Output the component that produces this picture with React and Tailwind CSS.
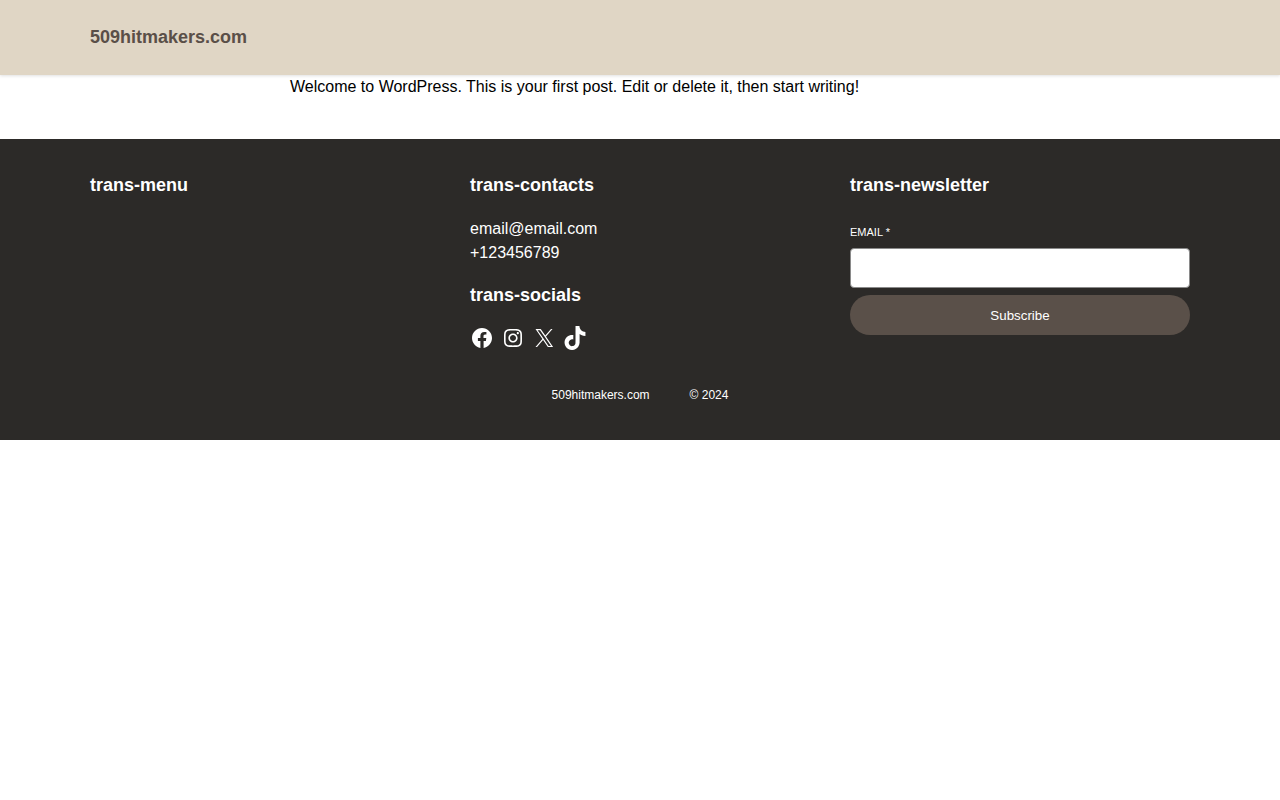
import React from 'react';

const FONT = "font-['Liberation_Sans',Arial,sans-serif]";

const SocialIcons = () => (
    <div className="flex items-center mt-[15px] h-[32px]">
        {/* facebook */}
        <svg viewBox="0 0 24 24" className="w-6 h-6 fill-white">
            <path d="M12 2C6.5 2 2 6.5 2 12c0 5 3.7 9.1 8.4 9.9v-7H7.9V12h2.5V9.8c0-2.5 1.5-3.9 3.8-3.9 1.1 0 2.2.2 2.2.2v2.5h-1.3c-1.2 0-1.6.8-1.6 1.6V12h2.8l-.4 2.9h-2.3v7C18.3 21.1 22 17 22 12c0-5.5-4.5-10-10-10z" />
        </svg>
        {/* instagram */}
        <svg viewBox="0 0 24 24" className="w-6 h-6 ml-[7px] fill-white">
            <path d="M12,4.622c2.403,0,2.688,0.009,3.637,0.052c0.877,0.04,1.354,0.187,1.671,0.31c0.42,0.163,0.72,0.358,1.035,0.673 c0.315,0.315,0.51,0.615,0.673,1.035c0.123,0.317,0.27,0.794,0.31,1.671c0.043,0.949,0.052,1.234,0.052,3.637 s-0.009,2.688-0.052,3.637c-0.04,0.877-0.187,1.354-0.31,1.671c-0.163,0.42-0.358,0.72-0.673,1.035 c-0.315,0.315-0.615,0.51-1.035,0.673c-0.317,0.123-0.794,0.27-1.671,0.31c-0.949,0.043-1.234,0.052-3.637,0.052 s-2.688-0.009-3.637-0.052c-0.877-0.04-1.354-0.187-1.671-0.31c-0.42-0.163-0.72-0.358-1.035-0.673 c-0.315-0.315-0.51-0.615-0.673-1.035c-0.123-0.317-0.27-0.794-0.31-1.671C4.631,14.688,4.622,14.403,4.622,12 s0.009-2.688,0.052-3.637c0.04-0.877,0.187-1.354,0.31-1.671c0.163-0.42,0.358-0.72,0.673-1.035 c0.315-0.315,0.615-0.51,1.035-0.673c0.317-0.123,0.794-0.27,1.671-0.31C9.312,4.631,9.597,4.622,12,4.622 M12,3 C9.556,3,9.249,3.01,8.289,3.054C7.331,3.098,6.677,3.25,6.105,3.472C5.513,3.702,5.011,4.01,4.511,4.511 c-0.5,0.5-0.808,1.002-1.038,1.594C3.25,6.677,3.098,7.331,3.054,8.289C3.01,9.249,3,9.556,3,12c0,2.444,0.01,2.751,0.054,3.711 c0.044,0.958,0.196,1.612,0.418,2.185c0.23,0.592,0.538,1.094,1.038,1.594c0.5,0.5,1.002,0.808,1.594,1.038 c0.572,0.222,1.227,0.375,2.185,0.418C9.249,20.99,9.556,21,12,21s2.751-0.01,3.711-0.054c0.958-0.044,1.612-0.196,2.185-0.418 c0.592-0.23,1.094-0.538,1.594-1.038c0.5-0.5,0.808-1.002,1.038-1.594c0.222-0.572,0.375-1.227,0.418-2.185 C20.99,14.751,21,14.444,21,12s-0.01-2.751-0.054-3.711c-0.044-0.958-0.196-1.612-0.418-2.185c-0.23-0.592-0.538-1.094-1.038-1.594 c-0.5-0.5-1.002-0.808-1.594-1.038c-0.572-0.222-1.227-0.375-2.185-0.418C14.751,3.01,14.444,3,12,3L12,3z M12,7.378 c-2.552,0-4.622,2.069-4.622,4.622S9.448,16.622,12,16.622s4.622-2.069,4.622-4.622S14.552,7.378,12,7.378z M12,15 c-1.657,0-3-1.343-3-3s1.343-3,3-3s3,1.343,3,3S13.657,15,12,15z M16.804,6.116c-0.596,0-1.08,0.484-1.08,1.08 s0.484,1.08,1.08,1.08c0.596,0,1.08-0.484,1.08-1.08S17.401,6.116,16.804,6.116z" />
        </svg>
        {/* x */}
        <svg viewBox="0 0 24 24" className="w-6 h-6 ml-[7px] fill-white">
            <path d="M13.982 10.622 20.54 3h-1.554l-5.693 6.618L8.745 3H3.5l6.876 10.007L3.5 21h1.554l6.012-6.989L15.868 21h5.245l-7.131-10.378Zm-2.128 2.474-.697-.997-5.543-7.93H8l4.474 6.4.697.996 5.815 8.318h-2.387l-4.745-6.787Z" />
        </svg>
        {/* tiktok */}
        <svg viewBox="0 0 32 32" className="w-6 h-6 ml-[7px] fill-white">
            <path d="M16.708 0.027c1.745-0.027 3.48-0.011 5.213-0.027 0.105 2.041 0.839 4.12 2.333 5.563 1.491 1.479 3.6 2.156 5.652 2.385v5.369c-1.923-0.063-3.855-0.463-5.6-1.291-0.76-0.344-1.468-0.787-2.161-1.24-0.009 3.896 0.016 7.787-0.025 11.667-0.104 1.864-0.719 3.719-1.803 5.255-1.744 2.557-4.771 4.224-7.88 4.276-1.907 0.109-3.812-0.411-5.437-1.369-2.693-1.588-4.588-4.495-4.864-7.615-0.032-0.667-0.043-1.333-0.019-1.984 0.24-2.537 1.495-4.964 3.443-6.615 2.208-1.923 5.301-2.839 8.197-2.297 0.027 1.975-0.052 3.948-0.052 5.923-1.323-0.428-2.869-0.308-4.025 0.495-0.844 0.547-1.485 1.385-1.819 2.333-0.276 0.676-0.197 1.427-0.181 2.145 0.317 2.188 2.421 4.027 4.667 3.828 1.489-0.016 2.916-0.88 3.692-2.145 0.251-0.443 0.532-0.896 0.547-1.417 0.131-2.385 0.079-4.76 0.095-7.145 0.011-5.375-0.016-10.735 0.025-16.093z" />
        </svg>
    </div>
);

const App = () => {
    return (
        <div className={`${FONT} bg-white min-h-[800px]`}>
            {/* Header */}
            <header className="relative h-[75px] bg-[#e0d6c5] px-[90px] pb-[2px] flex items-center shadow-[0_1px_3px_rgba(0,0,0,0.12)]">
                <a className="text-lg font-bold leading-[24px] text-[#5a4f48]">509hitmakers.com</a>
            </header>

            {/* Post */}
            <main className="pl-[290px] pb-10">
                <p className="text-base leading-6 text-black">
                    Welcome to WordPress. This is your first post. Edit or delete it, then start writing!
                </p>
            </main>

            {/* Footer */}
            <footer className="h-[301px] bg-[#2c2a28] px-[90px] pt-[34px] text-white">
                <div className="grid grid-cols-3 gap-10 h-[214px]">
                    <div>
                        <h2 className="text-lg font-bold leading-6">trans-menu</h2>
                    </div>

                    <div>
                        <h2 className="text-lg font-bold leading-6">trans-contacts</h2>
                        <p className="mt-[20px] text-base leading-6">email@email.com</p>
                        <p className="text-base leading-6">+123456789</p>
                        <h2 className="mt-[18px] text-lg font-bold leading-6">trans-socials</h2>
                        <SocialIcons />
                    </div>

                    <div>
                        <h2 className="text-lg font-bold leading-6">trans-newsletter</h2>
                        <label className="block mt-[28px] text-[11px] leading-[14px]">EMAIL *</label>
                        <input className="block mt-[9px] w-full h-10 rounded bg-white border border-[#8a8a8a]" />
                        <button className="block mt-[7px] w-full h-10 pt-[1px] rounded-[20px] bg-[#5a5049] text-[13.33px] text-white">
                            Subscribe
                        </button>
                    </div>
                </div>

                {/* Copyright */}
                <div className="flex justify-center gap-10 text-xs leading-4">
                    <span>509hitmakers.com</span>
                    <span>© 2024</span>
                </div>
            </footer>
        </div>
    );
};

export default App;
